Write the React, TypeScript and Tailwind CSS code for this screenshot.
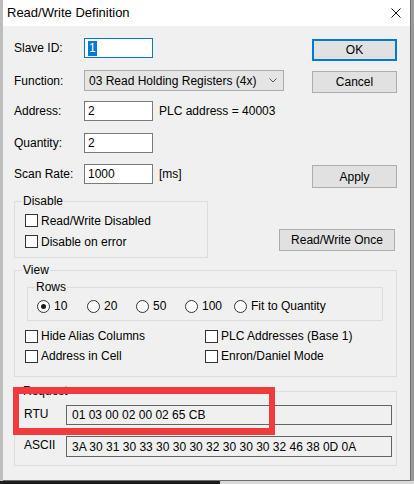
import type { ReactNode } from "react"

function TextBox({ value, w = "w-[69px]", selected = false }: { value: string; w?: string; selected?: boolean }) {
  return (
    <div
      className={`${w} h-[20px] bg-white border flex items-center px-[3px] ${
        selected ? "border-[#0078d7]" : "border-[#7a7a7a]"
      }`}
    >
      {selected ? <span className="bg-[#0078d7] text-white leading-[15px] px-[1px]">{value}</span> : <span>{value}</span>}
    </div>
  )
}

function Button({ label, w = "w-[85px]", h = "h-[22px]", focused = false, className = "" }: { label: string; w?: string; h?: string; focused?: boolean; className?: string }) {
  return (
    <div
      className={`${w} ${h} bg-[#e1e1e1] flex items-center justify-center ${
        focused ? "border-2 border-[#0078d7]" : "border border-[#adadad]"
      } ${className}`}
    >
      {label}
    </div>
  )
}

function CheckBox({ label }: { label: string }) {
  return (
    <div className="flex items-center h-[20px] gap-[3px]">
      <div className="w-[13px] h-[13px] border border-[#333333] bg-white" />
      <span>{label}</span>
    </div>
  )
}

function Radio({ label, checked = false, w }: { label: string; checked?: boolean; w?: string }) {
  return (
    <div className={`flex items-center gap-[4px] ${w ?? ""}`}>
      <div className="w-[13px] h-[13px] rounded-full border border-[#333333] bg-white flex items-center justify-center">
        {checked && <div className="w-[5px] h-[5px] rounded-full bg-[#1a1a1a]" />}
      </div>
      <span>{label}</span>
    </div>
  )
}

function Group({ title, className, children }: { title: string; className: string; children?: ReactNode }) {
  return (
    <div className={`border border-[#dcdcdc] ${className}`}>
      <span className="block w-fit -mt-[8px] ml-[7px] px-[1px] bg-[#f0f0f0] leading-[14px]">{title}</span>
      {children}
    </div>
  )
}

export default function App() {
  return (
    <div className="relative w-[414px] h-[484px] overflow-hidden bg-[#b8b8b8] font-['Liberation_Sans',Arial,sans-serif] text-[12px] leading-[14px] text-black">
      <div className="flex h-[481px]">
        <div className="w-[3px] bg-[#bdbdbd]" />

        {/* Dialog */}
        <div className="w-[408px] h-[481px] flex flex-col bg-[#f0f0f0] border-r border-b border-[#6e6e6e]">
          {/* Title bar */}
          <div className="h-[26px] bg-white flex items-center justify-between pl-[4px] pr-[9px]">
            <span className="text-[13px]">Read/Write Definition</span>
            <svg width="10" height="10" viewBox="0 0 10 10" className="shrink-0">
              <path d="M0.5 0.5L9.5 9.5M9.5 0.5L0.5 9.5" stroke="#111" strokeWidth="1" />
            </svg>
          </div>

          {/* Body */}
          <div className="flex flex-col pl-[11px] pr-[13px] pt-[12px]">
            <div className="h-[32px] flex items-start">
              <div className="flex items-center">
                <span className="w-[70px]">Slave ID:</span>
                <TextBox value="1" selected />
              </div>
              <Button label="OK" focused className="ml-auto mt-[1px]" />
            </div>

            <div className="h-[31px] flex items-start">
              <div className="flex items-center">
                <span className="w-[70px]">Function:</span>
                <div className="w-[200px] h-[21px] bg-[#e5e5e5] border border-[#acacac] flex items-center pl-[4px] pr-[6px]">
                  <span>03 Read Holding Registers (4x)</span>
                  <svg width="8" height="5" viewBox="0 0 8 5" className="ml-auto">
                    <path d="M0.5 0.5L4 4L7.5 0.5" fill="none" stroke="#555" strokeWidth="1" />
                  </svg>
                </div>
              </div>
              <Button label="Cancel" className="ml-auto mt-[1px]" />
            </div>

            <div className="h-[32px] flex items-start">
              <div className="flex items-center">
                <span className="w-[70px]">Address:</span>
                <TextBox value="2" />
                <span className="ml-[6px]">PLC address = 40003</span>
              </div>
            </div>

            <div className="h-[31px] flex items-start">
              <div className="flex items-center">
                <span className="w-[70px]">Quantity:</span>
                <TextBox value="2" />
              </div>
            </div>

            <div className="h-[37px] flex items-start">
              <div className="flex items-center">
                <span className="w-[70px]">Scan Rate:</span>
                <TextBox value="1000" />
                <span className="ml-[6px]">[ms]</span>
              </div>
              <Button label="Apply" h="h-[23px]" className="ml-auto mt-[1px]" />
            </div>

            <div className="flex items-start">
              <Group title="Disable" className="w-[194px] h-[57px]">
                <div className="flex flex-col pl-[10px] pt-[2px]">
                  <div className="h-[21px] flex items-center">
                    <CheckBox label="Read/Write Disabled" />
                  </div>
                  <div className="h-[21px] flex items-center">
                    <CheckBox label="Disable on error" />
                  </div>
                </div>
              </Group>
              <Button label="Read/Write Once" w="w-[116px]" className="ml-auto mr-[2px] mt-[28px]" />
            </div>

            <Group title="View" className="mt-[12px] w-[383px] h-[107px]">
              <Group title="Rows" className="mt-[10px] ml-[12px] w-[356px] h-[34px]">
                <div className="flex items-center h-[14px] mt-[5px] pl-[9px]">
                  <Radio label="10" checked w="w-[50px]" />
                  <Radio label="20" w="w-[49px]" />
                  <Radio label="50" w="w-[49px]" />
                  <Radio label="100" w="w-[49px]" />
                  <Radio label="Fit to Quantity" />
                </div>
              </Group>
              <div className="grid grid-cols-[180px_1fr] mt-[5px] pl-[10px]">
                <CheckBox label="Hide Alias Columns" />
                <CheckBox label="PLC Addresses (Base 1)" />
                <CheckBox label="Address in Cell" />
                <CheckBox label="Enron/Daniel Mode" />
              </div>
            </Group>

            <Group title="Request" className="mt-[14px] w-[383px] h-[75px]">
              <div className="flex flex-col pl-[9px] mt-[7px]">
                <div className="flex items-start">
                  <span className="w-[42px] mt-[2px]">RTU</span>
                  <div className="w-[326px] h-[20px] border border-[#646464] bg-[#f0f0f0] flex items-center px-[5px]">
                    01 03 00 02 00 02 65 CB
                  </div>
                </div>
                <div className="flex items-start mt-[11px]">
                  <span className="w-[42px] mt-[2px]">ASCII</span>
                  <div className="w-[326px] h-[21px] border border-[#646464] bg-[#f0f0f0] flex items-center px-[5px]">
                    3A 30 31 30 33 30 30 30 32 30 30 30 32 46 38 0D 0A
                  </div>
                </div>
              </div>
            </Group>
          </div>
        </div>

        <div className="w-[3px] bg-[#9a9a9a]" />
      </div>

      {/* bottom strip behind the dialog */}
      <div className="flex h-[3px]">
        <div className="w-[220px] bg-[#1c1c1c]" />
        <div className="flex-1 bg-[#d9d9d9]" />
      </div>

      {/* red annotation frame */}
      <div className="absolute left-[13px] top-[387px] w-[262px] h-[48px] border-x-[6px] border-y-[7px] border-[#ef3b3b]" />
    </div>
  )
}
